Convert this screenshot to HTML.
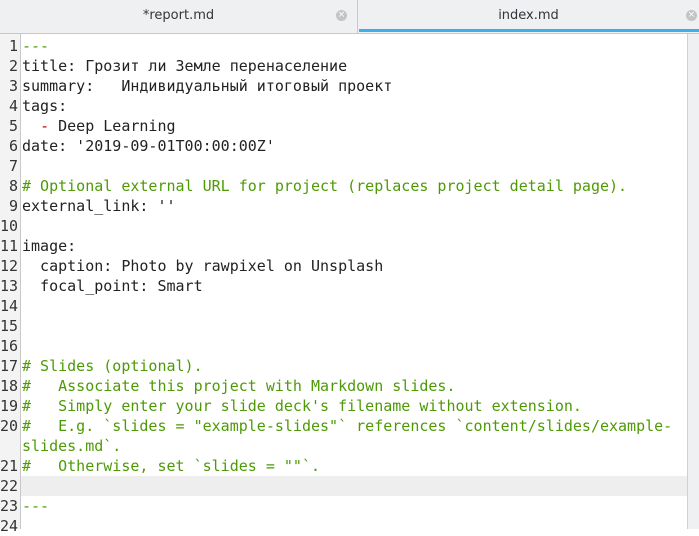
<!DOCTYPE html>
<html><head><meta charset="utf-8"><style>
body{margin:0;width:699px;height:529px;overflow:hidden;background:#fff;font-family:"DejaVu Sans Mono",monospace;}
.tabs{position:absolute;left:0;top:0;width:699px;height:33px;background:#eff0f1;border-bottom:1px solid #c8c8c8;font-family:"DejaVu Sans",sans-serif;font-size:13px;color:#31363b}
.tab{position:absolute;top:0;height:33px;line-height:31px;text-align:center}
.x{position:absolute;top:10px;width:11px;height:11px;border-radius:50%;background:#c4c4c4;color:#fff;font-size:9px;line-height:11px;text-align:center}
.gut{position:absolute;left:0;top:34px;width:20px;height:495px;background:#f3f3f3;border-right:1px solid #c8c8c8}
.ln{position:absolute;left:0;width:18px;text-align:right;font-size:15px;color:#333;line-height:20px}
.tx{position:absolute;left:22px;font-size:15px;line-height:20px;color:#222;white-space:pre;letter-spacing:0}
.g{color:#4e9a06}
.r{color:#cc0000}
</style></head><body>
<div class="tabs">
<div class="tab" style="left:0;width:357px">*report.md</div>
<div class="x" style="left:336px">×</div>
<div style="position:absolute;left:357px;top:0;width:1px;height:33px;background:#c8c8c8"></div>
<div class="tab" style="left:358px;width:341px">index.md</div>
<div class="x" style="left:346px;left:347px;display:none"></div>
<div class="x" style="left:686px">×</div>
<div style="position:absolute;left:359px;top:29px;width:340px;height:3px;background:#3daee9"></div>
</div>
<div style="position:absolute;left:21px;top:476px;width:666px;height:20px;background:#eeeeee"></div>
<div class="gut"></div>
<div style="position:absolute;left:687px;top:34px;width:12px;height:495px;background:#eff0f1;border-left:1px solid #d0d0d0"></div>
<div class="ln" style="top:36px">1</div><div class="tx g" style="top:36px">---</div>
<div class="ln" style="top:56px">2</div><div class="tx" style="top:56px">title: Грозит ли Земле перенаселение</div>
<div class="ln" style="top:76px">3</div><div class="tx" style="top:76px">summary:   Индивидуальный итоговый проект</div>
<div class="ln" style="top:96px">4</div><div class="tx" style="top:96px">tags:</div>
<div class="ln" style="top:116px">5</div><div class="tx" style="top:116px">  <span class="r">-</span> Deep Learning</div>
<div class="ln" style="top:136px">6</div><div class="tx" style="top:136px">date: '2019-09-01T00:00:00Z'</div>
<div class="ln" style="top:156px">7</div>
<div class="ln" style="top:176px">8</div><div class="tx g" style="top:176px"># Optional external URL for project (replaces project detail page).</div>
<div class="ln" style="top:196px">9</div><div class="tx" style="top:196px">external_link: ''</div>
<div class="ln" style="top:216px">10</div>
<div class="ln" style="top:236px">11</div><div class="tx" style="top:236px">image:</div>
<div class="ln" style="top:256px">12</div><div class="tx" style="top:256px">  caption: Photo by rawpixel on Unsplash</div>
<div class="ln" style="top:276px">13</div><div class="tx" style="top:276px">  focal_point: Smart</div>
<div class="ln" style="top:296px">14</div>
<div class="ln" style="top:316px">15</div>
<div class="ln" style="top:336px">16</div>
<div class="ln" style="top:356px">17</div><div class="tx g" style="top:356px"># Slides (optional).</div>
<div class="ln" style="top:376px">18</div><div class="tx g" style="top:376px">#   Associate this project with Markdown slides.</div>
<div class="ln" style="top:396px">19</div><div class="tx g" style="top:396px">#   Simply enter your slide deck's filename without extension.</div>
<div class="ln" style="top:416px">20</div><div class="tx g" style="top:416px">#   E.g. `slides = "example-slides"` references `content/slides/example-</div>
<div class="tx g" style="top:436px">slides.md`.</div>
<div class="ln" style="top:456px">21</div><div class="tx g" style="top:456px">#   Otherwise, set `slides = ""`.</div>
<div class="ln" style="top:476px">22</div>
<div class="ln" style="top:496px">23</div><div class="tx g" style="top:496px">---</div>
<div class="ln" style="top:516px">24</div>
</body></html>
